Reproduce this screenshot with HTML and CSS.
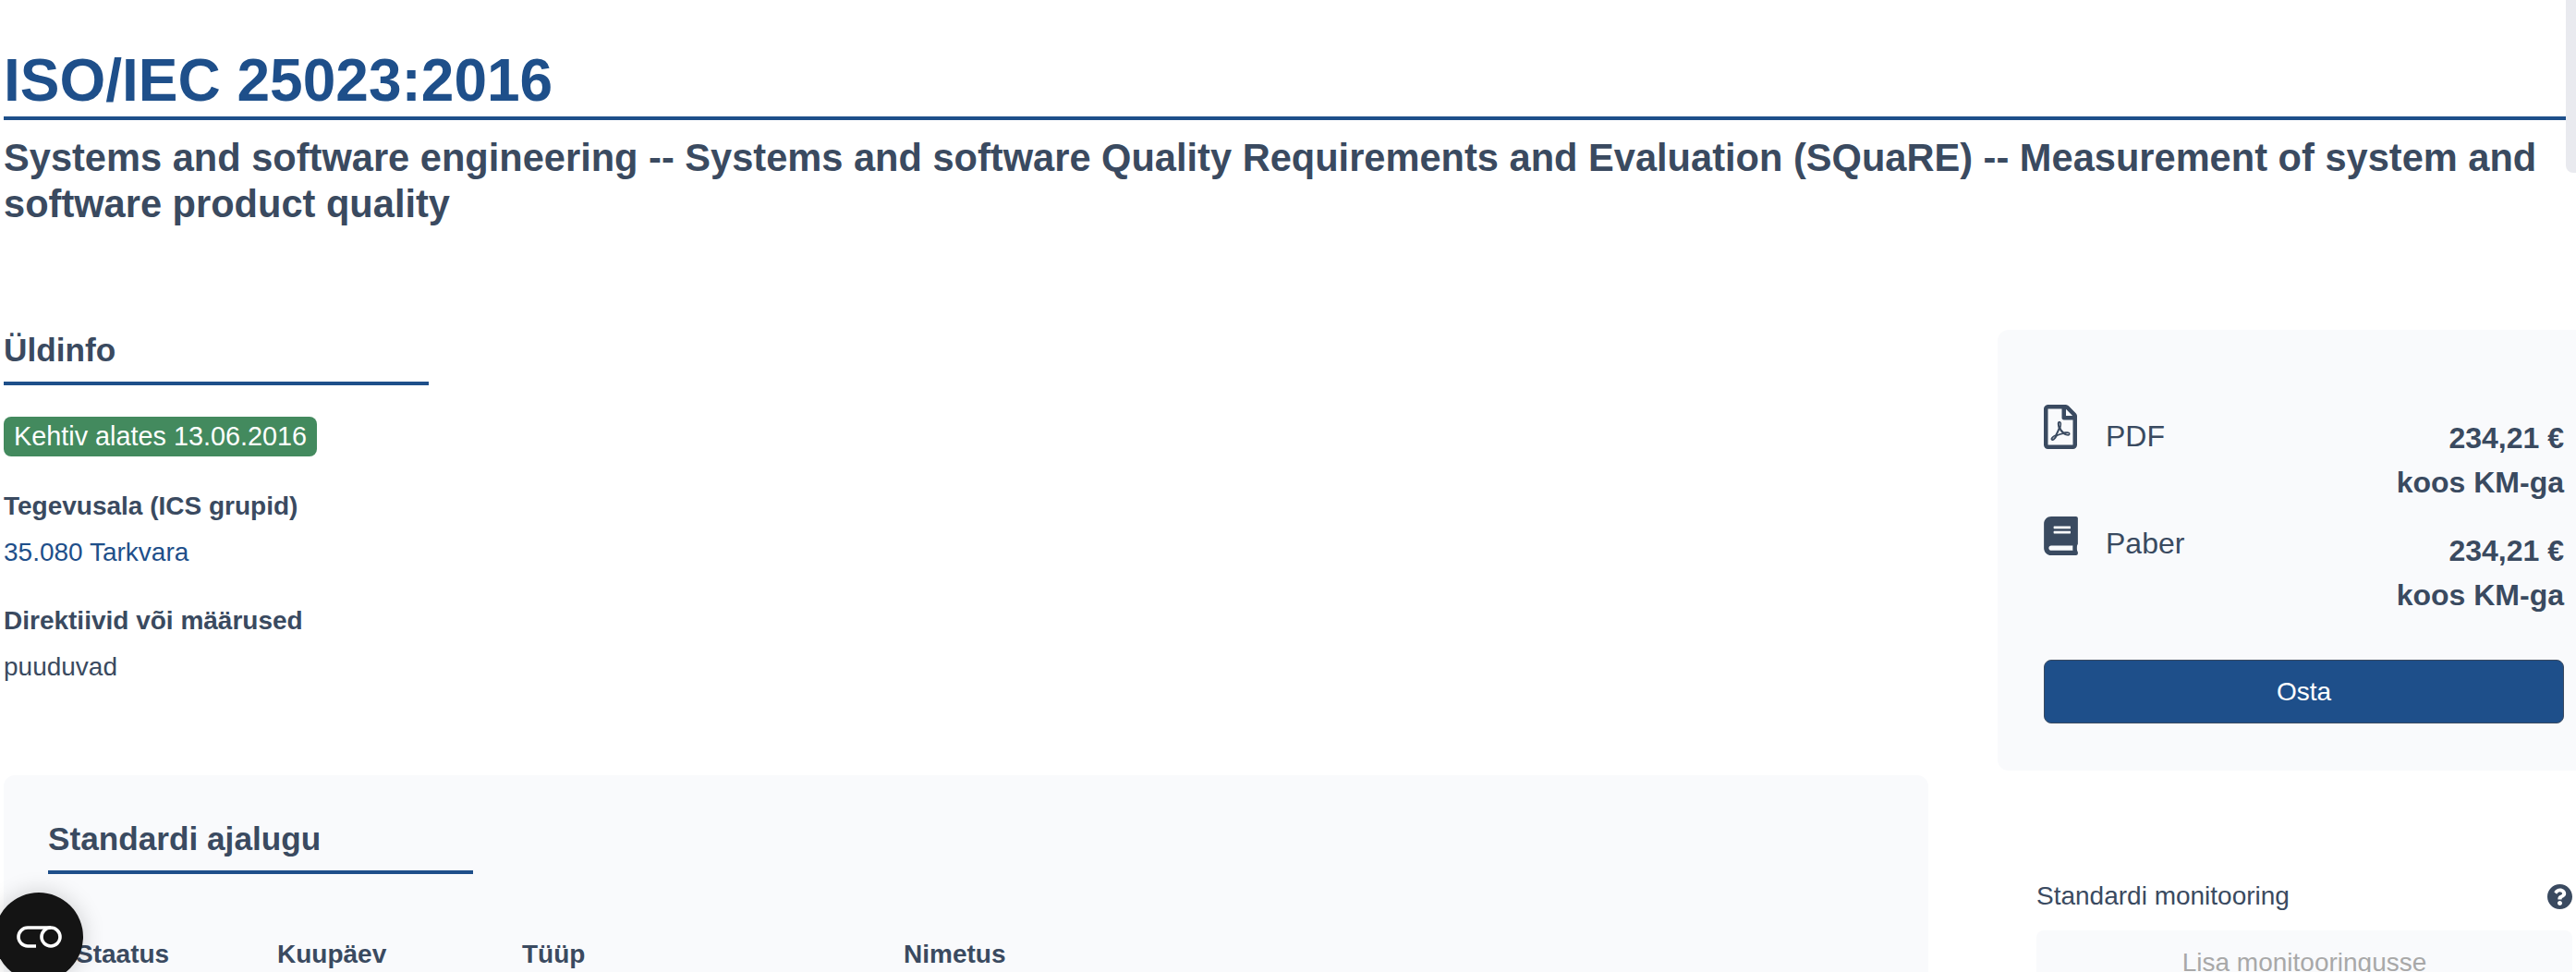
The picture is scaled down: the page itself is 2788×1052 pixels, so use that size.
FILE: index.html
```html
<!DOCTYPE html>
<html lang="et">
<head>
<meta charset="utf-8">
<title>ISO/IEC 25023:2016</title>
<link rel="stylesheet" href="styles.css">
</head>
<body>
<div class="page">
  <header class="head">
    <h1 class="title">ISO/IEC 25023:2016</h1>
    <h2 class="subtitle">Systems and software engineering -- Systems and software Quality Requirements and Evaluation (SQuaRE) -- Measurement of system and software product quality</h2>
  </header>
  <div class="columns">
    <main class="left">
      <section class="info">
        <h3 class="section-title">Üldinfo</h3>
        <span class="badge">Kehtiv alates 13.06.2016</span>
        <div class="field">
          <div class="label">Tegevusala (ICS grupid)</div>
          <a class="link">35.080 Tarkvara</a>
        </div>
        <div class="field">
          <div class="label">Direktiivid või määrused</div>
          <div class="value">puuduvad</div>
        </div>
      </section>
      <section class="history">
        <h3 class="section-title">Standardi ajalugu</h3>
        <div class="thead">
          <span class="th-status">Staatus</span>
          <span class="th-date">Kuupäev</span>
          <span class="th-type">Tüüp</span>
          <span>Nimetus</span>
        </div>
      </section>
    </main>
    <aside class="right">
      <section class="price-card">
        <div class="price-row">
          <svg class="icon-pdf" viewBox="0 0 384 512"><path d="M369.9 97.9L286 14C277 5 264.8-.1 252.1-.1H48C21.5 0 0 21.5 0 48v416c0 26.5 21.5 48 48 48h288c26.5 0 48-21.5 48-48V131.9c0-12.7-5.1-25-14.1-34zM332.1 128H256V51.9l76.1 76.1zM48 464V48h160v104c0 13.3 10.7 24 24 24h104v288H48zm250.2-143.7c-12.2-12-47-8.7-64.4-6.5-17.2-10.5-28.7-25-36.8-46.3 3.9-16.1 10.1-40.6 5.4-56-4.2-26.2-37.8-23.6-42.6-5.9-4.4 16.1-.4 38.5 7 67.1-10 23.9-24.9 56-35.4 74.4-20 10.3-47 26.2-51 46.2-3.3 15.8 26 55.2 76.1-31.2 22.4-7.4 46.8-16.5 68.4-20.1 18.9 10.2 41 17 55.8 17 25.5 0 28-28.2 17.5-38.7zm-198.1 77.8c5.1-13.7 24.5-29.5 30.4-35-19 30.3-30.4 35.7-30.4 35zm81.6-190.6c7.4 0 6.7 32.1 1.8 40.8-4.4-13.9-4.3-40.8-1.8-40.8zm-24.4 136.6c9.7-16.9 18-37 24.7-54.7 8.3 15.1 18.9 27.2 30.1 35.5-20.8 4.3-38.9 13.1-54.8 19.2zm131.6-5s-5 6-37.3-7.8c35.1-2.6 40.9 5.4 37.3 7.8z"/></svg>
          <span class="format">PDF</span>
          <div class="amount">234,21 €<br>koos KM-ga</div>
        </div>
        <div class="price-row price-row-last">
          <svg class="icon-book" viewBox="0 0 448 512"><path d="M448 360V24c0-13.3-10.7-24-24-24H96C43 0 0 43 0 96v320c0 53 43 96 96 96h328c13.3 0 24-10.7 24-24v-16c0-7.5-3.5-14.3-8.9-18.7-4.2-15.4-4.2-59.3 0-74.7 5.4-4.3 8.9-11.1 8.9-18.6zM128 134c0-3.3 2.7-6 6-6h212c3.3 0 6 2.7 6 6v20c0 3.3-2.7 6-6 6H134c-3.3 0-6-2.7-6-6v-20zm0 64c0-3.3 2.7-6 6-6h212c3.3 0 6 2.7 6 6v20c0 3.3-2.7 6-6 6H134c-3.3 0-6-2.7-6-6v-20zm253.4 250H96c-17.7 0-32-14.3-32-32 0-17.6 14.4-32 32-32h285.4c-1.9 17.1-1.9 46.9 0 64z"/></svg>
          <span class="format format-paper">Paber</span>
          <div class="amount">234,21 €<br>koos KM-ga</div>
        </div>
        <button class="buy">Osta</button>
      </section>
      <section class="monitor">
        <div class="monitor-head">
          <span>Standardi monitooring</span>
          <svg class="icon-help" viewBox="8 8 496 496"><path d="M504 256c0 136.997-111.043 248-248 248S8 392.997 8 256C8 119.083 119.043 8 256 8s248 111.083 248 248zM262.655 90c-54.497 0-89.255 22.957-116.549 63.758-3.536 5.286-2.353 12.415 2.715 16.258l34.699 26.31c5.205 3.947 12.621 3.008 16.665-2.122 17.864-22.658 30.113-35.797 57.303-35.797 20.429 0 45.698 13.148 45.698 32.958 0 14.976-12.363 22.667-32.534 33.976C247.128 238.528 216 254.941 216 296v4c0 6.627 5.373 12 12 12h56c6.627 0 12-5.373 12-12v-1.333c0-28.462 83.186-29.647 83.186-106.667 0-58.002-60.165-102-116.531-102zM256 338c-25.365 0-46 20.635-46 46 0 25.364 20.635 46 46 46s46-20.636 46-46c0-25.365-20.635-46-46-46z"/></svg>
        </div>
        <button class="add" disabled>Lisa monitooringusse</button>
      </section>
    </aside>
  </div>
</div>
<div class="scroll-thumb"></div>
<div class="fab">
  <svg class="fab-icon" viewBox="0 0 49 24"><path d="M21 22H12a10 10 0 0 1 0-20H37" fill="none" stroke="#fff" stroke-width="3.6"/><circle cx="37" cy="12" r="10" fill="none" stroke="#fff" stroke-width="3.6"/></svg>
</div>
</body>
</html>
```

FILE: styles.css
```css
html, body { margin: 0; height: 100%; overflow: hidden; background: #fff; }
body { font-family: "Liberation Sans", Arial, sans-serif; font-size: 28px; line-height: 42px; color: #3a4a60; }
h1, h2, h3 { margin: 0; }
.page { padding: 0 0 0 4px; width: 2773px; }
.head { padding-top: 48px; }
.title { font-size: 64px; line-height: 78px; color: #1e4f8a; border-bottom: 4px solid #1e4f8a; }
.subtitle { font-size: 41.6px; line-height: 50px; padding-top: 16px; }
.columns { display: flex; margin-top: 108px; width: 2784px; justify-content: space-between; }
.left { width: 2083px; }
.right { width: 626px; }
.section-title { font-size: 35.2px; line-height: 50px; width: 460px; border-bottom: 4px solid #1e4f8a; padding-bottom: 9px; }
.badge { display: inline-block; margin-top: 34px; padding: 0 11px; height: 43px; line-height: 43px; border-radius: 8px; background: #438a5e; color: #fff; font-size: 28.8px; }
.field { margin-top: 29px; }
.field + .field { margin-top: 24px; }
.label { font-weight: 700; line-height: 50px; }
.link { color: #1e4f8a; display: block; line-height: 50px; }
.value { line-height: 50px; }
.history { margin-top: 92px; background: #f9fafc; border-radius: 12px; padding: 44px 49px 0 48px; height: 300px; }
.thead { display: flex; margin-top: 66px; font-weight: 700; padding-left: 30px; }
.th-status { width: 218px; }
.th-date { width: 265px; }
.th-type { width: 413px; }
.price-card { margin-top: 3px; background: #f9fafc; border-radius: 12px 0 0 12px; padding: 76px 13px 0 50px; height: 477px; box-sizing: border-box; }
.price-row { display: flex; align-items: flex-start; height: 122px; }
.price-row-last { height: 159px; }
.icon-pdf { width: 36px; height: 48px; fill: #3a4a60; margin-top: 5px; }
.icon-book { width: 37px; height: 42px; fill: #3a4a60; margin-top: 4px; }
.format { margin-left: 31px; font-size: 32px; line-height: 50px; margin-top: 14px; }
.format-paper { margin-left: 30px; margin-top: 8px; }
.amount { margin-left: auto; text-align: right; font-weight: 700; line-height: 48px; margin-top: 17px; font-size: 32px; }
.buy { display: block; width: 100%; height: 69px; font: inherit; color: #fff; background: #1e4f8a; border: 1px solid #3a4a60; border-radius: 8px; }
.monitor { margin: 0 4px 0 42px; padding-top: 115px; }
.monitor-head { display: flex; justify-content: space-between; align-items: center; height: 42px; }
.icon-help { width: 27px; height: 27px; fill: #3a4a60; }
.add { display: block; width: 100%; height: 70px; margin-top: 16px; font: inherit; color: #a8a8a8; background: #f9fafc; border: 0; border-radius: 8px; }
.scroll-thumb { position: absolute; top: 0; right: 0; width: 11px; height: 187px; background: #e9eaef; border-radius: 0 0 0 8px; }
.fab { position: absolute; left: -6px; top: 966px; width: 96px; height: 96px; border-radius: 50%; background: #141414; box-shadow: 0 0 24px rgba(0,0,0,.18); display: flex; align-items: center; justify-content: center; }
.fab-icon { width: 49px; height: 24px; }
```
